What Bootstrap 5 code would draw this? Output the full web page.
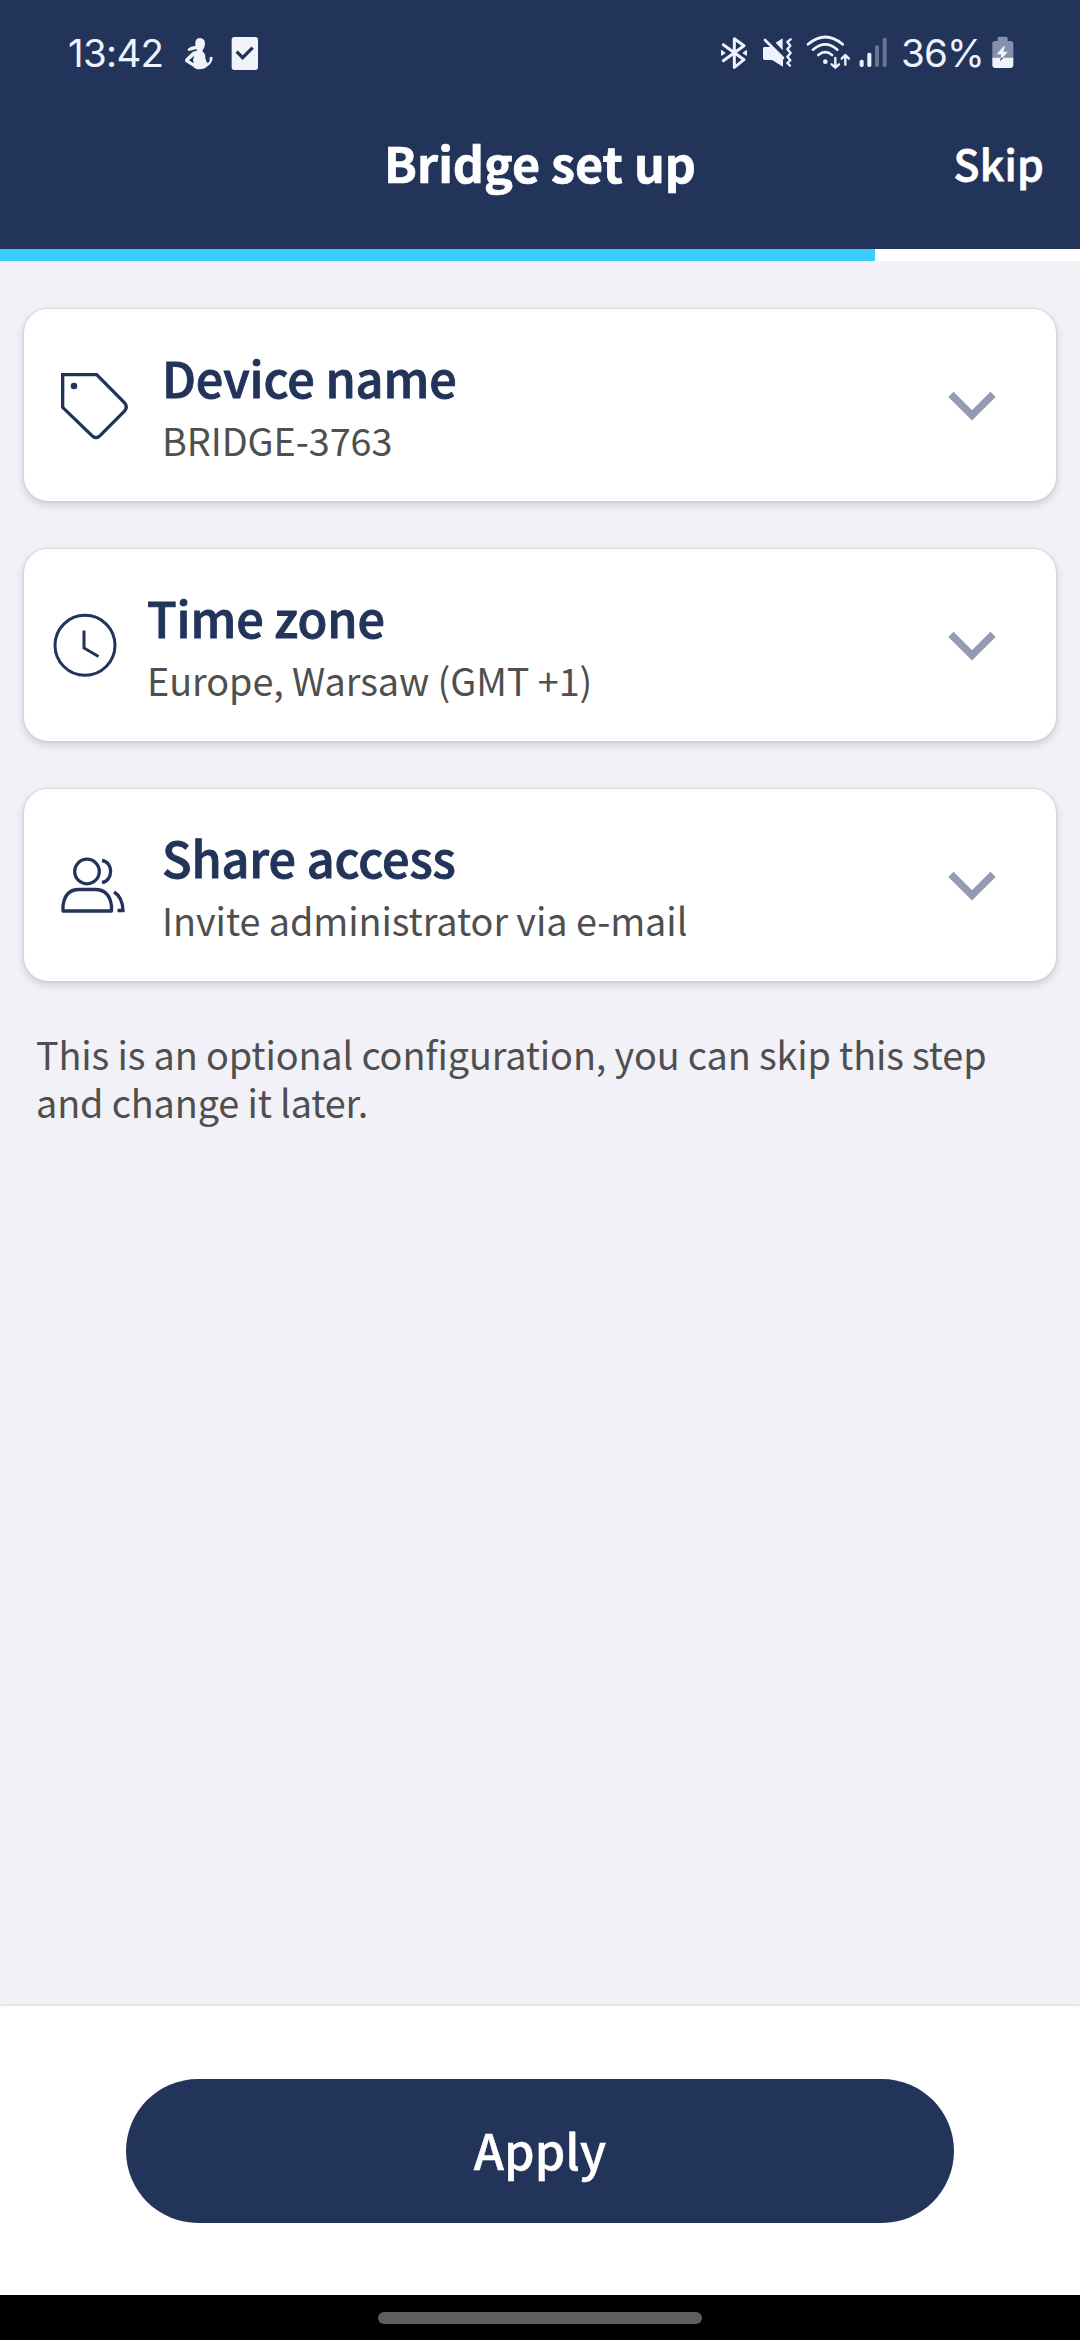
<!DOCTYPE html>
<html lang="en">
<head>
<meta charset="utf-8">
<meta name="viewport" content="width=device-width, initial-scale=1">
<title>Bridge set up</title>
<link href="https://cdn.jsdelivr.net/npm/bootstrap@5.3.0/dist/css/bootstrap.min.css" rel="stylesheet">
<style>
:root{--navy:#22345a;--ink:#4f4f4f}
body{background:#f2f1f7;color:var(--ink);font-family:"Noto Sans CJK JP","Noto Sans CJK SC",sans-serif;height:2340px;overflow:hidden}
svg{display:block;flex:none}
.top-area{background:var(--navy);height:249px}
.status-row{height:106px;padding:0 66px 0 68px;font:400 38.5px/106px Inter,sans-serif;color:#eef2fc}
.clock-text{width:96px;letter-spacing:-.7px;white-space:nowrap}
.charge-text{width:86px;margin-left:13px;letter-spacing:-.8px;white-space:nowrap}
.title-row{display:grid;grid-template-columns:1fr auto 1fr;height:120px;line-height:120px}
.page-title{font-size:48.4px;font-weight:700;line-height:113px;-webkit-text-stroke:.7px #fff}
.skip-link{font-size:42.5px;font-weight:500;padding-right:36px;line-height:113px;letter-spacing:.3px;-webkit-text-stroke:.8px #fff}
.setup-progress{height:12px;background:#fff;border-radius:0}
.setup-progress .progress-bar{background:#38cdff}
.setup-list{padding:48px 24px 0;gap:48px}
.setup-card{height:192px;border:0;border-radius:24px;box-shadow:0 3px 8px rgba(40,40,60,.2),0 0 3px rgba(40,40,60,.14);padding:38px 58px 0 0}
.setup-title{font-size:48.6px;line-height:60px;font-weight:500;color:var(--navy);margin:0 0 9px;letter-spacing:-.12px;-webkit-text-stroke:.9px var(--navy)}
.setup-sub{font-size:37.8px;line-height:48px;letter-spacing:-.08px}
.glyph-col{width:138px}
.glyph-col.slim{width:123px}
.hint-text{font-size:37.8px;line-height:48px;padding:49px 36px 0;margin:0;letter-spacing:-.14px}
.action-area{height:289px;background:#fff;padding:73px 126px 0;box-shadow:0 -1px 2px rgba(40,40,60,.1)}
.apply-btn{height:144px;background:var(--navy)!important;border:0;color:#fff!important;font-size:48.6px;font-weight:500;line-height:136px;padding:0 0 4px;-webkit-text-stroke:.4px #fff}
.gesture-area{height:45px;background:#000;padding-top:17px}
.gesture-pill{width:324px;height:12px;background:#5e5e5e}
</style>
</head>
<body class="d-flex flex-column">
<header class="top-area text-white">
  <div class="status-row d-flex">
    <span class="clock-text">13:42</span>
    <svg style="margin:37px 0 0 20px" width="30" height="33" viewBox="432 50 90 99" fill="#f1f3fa"><path d="M466 68Q466 53 481 53Q496 55 495 72Q494 84 488 88V94Q497 99 496 114L500 126Q506 130 509 122V111Q518 106 518 114Q516 129 502 138Q495 147 478 147Q464 146 460 139L436 124Q433 119 438 114L457 96Q463 91 470 92V86L447 92Q441 91 443 86Q454 76 466 77ZM447 120L461 129L459 118L463 106Z" fill-rule="evenodd"/></svg>
    <svg style="margin:36px 0 0 17px" width="28" height="35" viewBox="575 48 84 105"><rect x="577" y="51" width="79" height="99" rx="8" fill="#f1f3fa"/><path d="M592 95L610 113L640 83" fill="none" stroke="#22345a" stroke-width="10"/></svg>
    <svg class="ms-auto" style="margin-top:36px" width="28" height="34" viewBox="61 48 84 102" fill="none" stroke="#eef2fc" stroke-width="9" stroke-linejoin="round" stroke-linecap="round"><path d="M71 74L133 119L104 142V56L133 77L71 122"/><path d="M66 92V105L75 99ZM140 92V105L131 99Z" fill="#eef2fc" stroke-width="4"/></svg>
    <svg style="margin:37px 0 0 14px" width="31" height="32" viewBox="187 52 93 96" fill="none" stroke="#eef2fc"><path d="M228 69L249 56V92ZM190 86Q190 82 195 82H213L250 116V141L217 121H195Q190 121 190 115Z" fill="#eef2fc" stroke="none"/><path d="M196 61L250 115" stroke-width="8" stroke-linecap="round"/><path d="M273 59L263 67L272 78L263 89L273 100L263 111L272 122L263 130L271 138" stroke-width="7" stroke-linecap="round" stroke-linejoin="round"/></svg>
    <svg style="margin:35px 0 0 13px" width="45" height="35" viewBox="318 45 135 105" fill="none" stroke="#eef2fc" stroke-linecap="round" stroke-linejoin="round" stroke-width="8"><path d="M324 73Q376 29 428 73M339 89Q376 57 412 89M355 105Q376 88 396 105"/><circle cx="376" cy="125" r="7" fill="#eef2fc" stroke="none"/><path d="M406 114V142M395 133L406 143L417 133M436 134V106M425 116L436 105L447 116" stroke-width="7"/></svg>
    <svg style="margin:37px 0 0 8px" width="29" height="31" viewBox="478 51 87 93" fill="#eef2fc"><rect x="480" y="119" width="12" height="22" rx="5"/><rect x="503" y="98" width="12" height="43" rx="5"/><rect x="526" y="76" width="12" height="65" rx="5" opacity=".35"/><rect x="549" y="53" width="12" height="88" rx="5" opacity=".35"/></svg>
    <span class="charge-text">36%</span>
    <svg style="margin:36px 0 0 5px" width="22" height="33" viewBox="875 49 66 99"><path d="M876 72Q876 64 884 64H892V56Q892 51 897 51H917Q922 51 922 56V64H931Q939 64 939 72V116H876Z" fill="#8591ab"/><path d="M876 114H939V136Q939 145 930 145H885Q876 145 876 136Z" fill="#f1f3fa"/><path d="M910 80L889 104H903L899 124L922 96H909L914 80Z" fill="#f1f3fa"/><path d="M902 114H909L899 125Z" fill="#333"/></svg>
  </div>
  <div class="title-row">
    <span></span><span class="page-title">Bridge set up</span><a class="skip-link text-white text-end text-decoration-none" href="#">Skip</a>
  </div>
</header>
<div class="progress setup-progress"><div class="progress-bar" style="width:81%"></div></div>
<main class="flex-grow-1">
  <div class="setup-list d-flex flex-column">
    <section class="card setup-card flex-row">
      <div class="glyph-col"><svg style="margin:23px 0 0 35px" width="72" height="72" viewBox="177 240 216 216" fill="none" stroke="#22345a" stroke-width="10"><path d="M188 254H290L373 338Q384 350 374 363L301 436Q288 450 275 436L188 352Z"/><circle cx="222" cy="288" r="10" fill="#22345a" stroke="none"/></svg></div>
      <div class="flex-grow-1"><h2 class="setup-title">Device name</h2><div class="setup-sub">BRIDGE-3763</div></div>
      <svg style="margin-top:44px" width="50" height="32" viewBox="144 122 150 96" fill="none" stroke="#929cb0" stroke-width="22"><path d="M153 132L216 195L279 132"/></svg>
    </section>
    <section class="card setup-card flex-row">
      <div class="glyph-col slim"><svg style="margin:24px 0 0 28px" width="68" height="68" viewBox="0 0 68 68" fill="none" stroke="#22345a" stroke-width="3"><circle cx="33" cy="34.3" r="30"/><path d="M32 19.5V37L46.500 45.500"/></svg></div>
      <div class="flex-grow-1"><h2 class="setup-title">Time zone</h2><div class="setup-sub">Europe, Warsaw (GMT +1)</div></div>
      <svg style="margin-top:44px" width="50" height="32" viewBox="144 122 150 96" fill="none" stroke="#929cb0" stroke-width="22"><path d="M153 132L216 195L279 132"/></svg>
    </section>
    <section class="card setup-card flex-row">
      <div class="glyph-col"><svg style="margin:24px 0 0 35px" width="70" height="70" viewBox="59 851 70 70" fill="none" stroke="#22345a" stroke-width="3.300"><circle cx="87" cy="871.500" r="12.300"/><path d="M102 860.500C113.500 862 113.500 880.500 102 882.500"/><path d="M63 911V906Q65 889.500 79 889.500H95Q109.500 889.500 111.500 906V911Z" stroke-linejoin="round"/><path d="M114 892Q122.500 897 123 910.500H117.500"/></svg></div>
      <div class="flex-grow-1"><h2 class="setup-title">Share access</h2><div class="setup-sub">Invite administrator via e-mail</div></div>
      <svg style="margin-top:44px" width="50" height="32" viewBox="144 122 150 96" fill="none" stroke="#929cb0" stroke-width="22"><path d="M153 132L216 195L279 132"/></svg>
    </section>
  </div>
  <p class="hint-text">This is an optional configuration, you can skip this step<br>and change it later.</p>
</main>
<footer>
  <div class="action-area"><button class="btn apply-btn rounded-pill w-100 d-block">Apply</button></div>
  <div class="gesture-area"><div class="gesture-pill rounded-pill mx-auto"></div></div>
</footer>
<script src="https://cdn.jsdelivr.net/npm/bootstrap@5.3.0/dist/js/bootstrap.bundle.min.js"></script>
</body>
</html>
